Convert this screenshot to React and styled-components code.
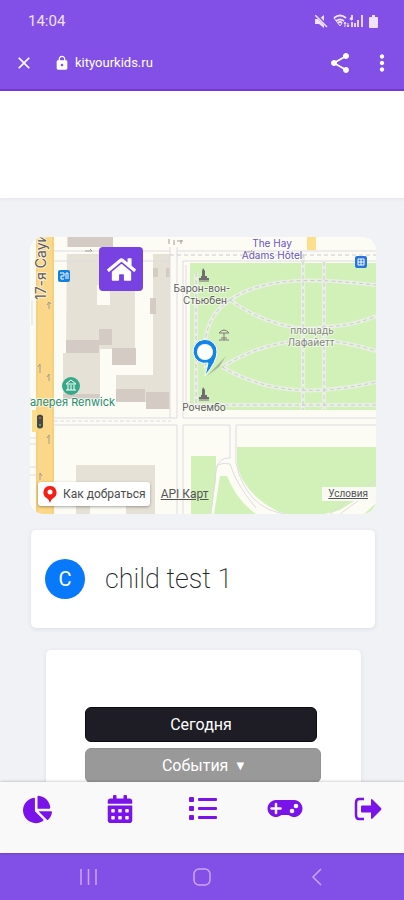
import React from "react";
import styled, { createGlobalStyle } from "styled-components";
import { MdClose, MdLock, MdShare, MdMoreVert } from "react-icons/md";
import { FaChartPie, FaCalendarAlt, FaHome } from "react-icons/fa";

const GlobalStyle = createGlobalStyle`
  * { box-sizing: border-box; }
  body { margin: 0; font-family: Roboto, "Liberation Sans", sans-serif; color: #212529; background: #f0f2f6; }
  button { font: inherit; border: 0; padding: 0; cursor: pointer; }
`;

const Screen = styled.div`
  display: flex;
  flex-direction: column;
  height: 100vh;
`;

const TopBar = styled.header`
  flex: none;
  color: #fff;
  background: #8250e6;
  border-bottom: 2px solid #7438d4;
`;

const StatusBar = styled.div`
  display: flex;
  align-items: center;
  justify-content: space-between;
  height: 42px;
  padding: 0 26px 0 28px;
  font-size: 15px;
  color: #f0e2fc;
`;

const StatusIcons = styled.div`
  display: flex;
  align-items: center;
  gap: 5px;
`;

const AddressBar = styled.div`
  display: flex;
  align-items: center;
  height: 47px;
  padding: 0 0 6px 14px;
`;

const BarButton = styled.button`
  display: flex;
  align-items: center;
  justify-content: center;
  width: ${(p) => p.$width}px;
  height: 32px;
  color: #fff;
  background: none;
`;

const Address = styled.div`
  display: flex;
  flex: 1;
  align-items: center;
  gap: 5px;
  margin-left: 20px;
  font-size: 13px;
`;

const Content = styled.main`
  flex: 1;
  min-height: 0;
  overflow-y: auto;
  scrollbar-width: none;
`;

const Banner = styled.div`
  height: 107px;
  background: #fff;
  box-shadow: 0 1px 3px rgba(60, 60, 90, 0.08);
`;

const Sections = styled.div`
  display: flex;
  flex-direction: column;
  padding: 39px 28px 24px 30px;
`;

const MapPanel = styled.section`
  position: relative;
  height: 277px;
  overflow: hidden;
  border-radius: 14px;
  background: #fcfcf5;
`;

const MapDrawing = styled.svg`
  display: block;
  width: 100%;
  height: 100%;
`;

const HomeButton = styled.button`
  position: absolute;
  top: 10px;
  left: 69px;
  display: flex;
  align-items: center;
  justify-content: center;
  width: 44px;
  height: 44px;
  color: #fff;
  background: #7842e2;
  border-radius: 4px;
`;

const MapFooter = styled.div`
  position: absolute;
  right: 0;
  bottom: 8px;
  left: 8px;
  display: flex;
  align-items: center;
  font-size: 12px;
`;

const RouteButton = styled.button`
  display: flex;
  align-items: center;
  gap: 5px;
  height: 24px;
  padding: 0 4px;
  color: #4b4b4b;
  font-size: 12px;
  white-space: nowrap;
  background: #fff;
  border-radius: 3px;
  box-shadow: 0 1px 3px rgba(0, 0, 0, 0.35);
`;

const MapLink = styled.a`
  margin-left: 11px;
  color: #555;
  white-space: nowrap;
  text-decoration: underline;
`;

const TermsLink = styled(MapLink)`
  margin-left: auto;
  padding: 0 8px 0 6px;
  font-size: 10px;
  line-height: 14px;
  background: #f8faf3;
`;

const ChildCard = styled.section`
  display: flex;
  align-items: center;
  gap: 20px;
  height: 98px;
  margin: 16px 1px 0;
  padding: 0 14px;
  background: #fff;
  border-radius: 5px;
  box-shadow: 0 1px 4px rgba(50, 50, 80, 0.1);
`;

const Avatar = styled.div`
  display: flex;
  align-items: center;
  justify-content: center;
  width: 40px;
  height: 40px;
  color: #fff;
  font-size: 20px;
  background: #0879fb;
  border-radius: 50%;
`;

const ChildName = styled.h1`
  margin: 0;
  font-size: 27px;
  font-weight: 200;
  line-height: 34px;
`;

const EventsCard = styled.section`
  display: flex;
  flex-direction: column;
  gap: 6px;
  height: 240px;
  margin: 22px 15px 0 16px;
  padding: 57px 40px 0 39px;
  background: #fff;
  border-radius: 5px;
  box-shadow: 0 1px 4px rgba(50, 50, 80, 0.1);
`;

const ActionButton = styled.button`
  flex: none;
  height: 35px;
  margin-right: ${(p) => (p.$muted ? 0 : 4)}px;
  color: #fff;
  font-size: 16px;
  background: ${(p) => (p.$muted ? "#999" : "#1e1d25")};
  border: 1px solid ${(p) => (p.$muted ? "#929292" : "#0c0b12")};
  border-radius: 6px;
`;

const Caret = styled.span`
  margin-left: 8px;
  font-family: "DejaVu Sans", sans-serif;
  font-size: 10px;
  vertical-align: 2px;
`;

const TabBar = styled.nav`
  z-index: 1;
  display: flex;
  flex: none;
  justify-content: space-between;
  height: 71px;
  padding: 8px 15px 0 16px;
  background: #f9f9f9;
  box-shadow: 0 0 3px rgba(0, 0, 0, 0.3);
`;

const Tab = styled.a`
  display: flex;
  align-items: center;
  justify-content: center;
  width: 42px;
  height: 38px;
  color: #7913e9;
`;

const SystemBar = styled.footer`
  display: grid;
  flex: none;
  grid-template-columns: repeat(3, 1fr);
  justify-items: center;
  width: 100%;
  height: 47px;
  padding: 0 31px;
  background: #8250e6;
`;

const SystemButton = styled(BarButton)`
  height: 47px;
  color: #cda5f5;
`;

const path = { fill: "none", stroke: "#e9efe2", strokeWidth: 4 };
const dash = { fill: "none", stroke: "#c9cccb", strokeWidth: 1, strokeDasharray: "4 3" };
const trails = [
  "M166 173V36",
  "M160 168H346",
  "M273 17V173", "M294 25V173",
  "M200 63C236 38 290 42 346 48",
  "M200 63C230 85 270 96 294 90C315 89 330 86 346 79",
  "M192 130C240 100 290 96 346 114",
  "M192 130C240 158 290 158 346 145",
  "M200 63C174 80 173 106 176 132",
];
const halo = { stroke: "#fcfcf5", strokeWidth: 2, strokeOpacity: 0.7, paintOrder: "stroke", strokeLinejoin: "round" };

function Monument({ x, y }) {
  return (
    <g transform={`translate(${x} ${y})`} fill="#716b72">
      <path d="M4 0L6 3V8H8V10H10V12H0V10H2V8H3V3Z" />
      <path d="M0 13H10" stroke="#716b72" />
    </g>
  );
}

function CityMap() {
  return (
    <MapDrawing viewBox="0 0 346 277" preserveAspectRatio="xMidYMid slice" role="img" aria-label="Карта" fontFamily='Inter, "Open Sans", sans-serif'>
      <path fill="#fcfcf5" d="M0 0H346V277H0Z" />
      <path fill="#e6e1d7" d="M37 0H83V17H79V68H80V48H105V128H82V112H70V161H33V116H36Z" />
      <path fill="#fcfcf5" d="M67 48H79V68H67Z" />
      <path fill="#e6e1d7" d="M123 12H140V172H116V165H86V138H123ZM46 228H125V277H96V258H60V277H46Z" />
      <path fill="#d3cbc4" d="M38 0H83V10H38ZM36 103H69V116H36ZM69 92H82V108H69ZM82 111H106V128H82ZM33 157H70V162H33ZM120 61H126V77H120ZM86 152H115V165H86ZM116 155H139V172H116ZM123 31H128V40H123ZM136 31H140V40H136Z" />
      <path fill="#fcfcf5" d="M0 10H346V17H0Z" />

      <path fill="#d2f1b8" d="M160 26H346V173H160ZM161 219H186V243L181 277H161ZM190 239H197Q207 264 226 277H184ZM207 210H346V250L310 273Q280 283 249 275Q213 257 207 227ZM334 277L346 266V277Z" />
      {trails.map((d) => <path key={d} d={d} {...path} />)}
      {trails.map((d) => <path key={`${d}-dash`} d={d} {...dash} />)}

      <g fill="none" stroke="#dedbe0" strokeWidth="1">
        <path d="M24 14H140M147 14H346M24 24H140M153 24H346M24 181H147M153 181H346M24 188H147V277M153 277V188H200M206 188H346" />
        <path d="M140 10V181M147 10V181M153 24V181M156 28V173" />
        <path d="M200 188V221Q188 220 186 234L181 277M206 188V226Q211 249 224 262Q237 275 256 277M186 230Q190 225 200 227Q206 247 226 271M300 277L346 243M310 277L346 251M0 201H6M0 207H6M2 63V88M0 230H6M0 238H6" />
        <path d="M24 184H141" strokeDasharray="4 2" />
      </g>
      <path d="M140 18H346" {...dash} />
      <path fill="#fbd889" d="M6 0H24V277H6Z" />
      <path stroke="#efc97c" d="M7 0V277M23 0V277" />
      <path fill="#fbdf8c" d="M277 0H286V13H277ZM2 173H7V195H2Z" />
      <g stroke="#a39b91" fill="none">
        <path d="M19 72V65L17 68M19 65L21 67M10 136V127L8 130M19 144V137L17 140M19 207V198L17 201M10 243V236L12 239" />
        <path d="M55 14H62L60 12M214 15H223L221 13M147 4H153M139 2V7M144 3V8M151 3V7" strokeWidth="1" />
      </g>
      <path fill="#444b46" d="M7 179Q10 176 13 179V190Q10 193 7 190Z" />
      <circle cx="10" cy="181" r="1" fill="#c85c50" /><circle cx="10" cy="188" r="1" fill="#77aa70" />

      <rect x="28" y="33" width="12" height="12" rx="2" fill="#1680dd" />
      <path d="M30 36H34V39H31V42H34M36 42V36H38V42" fill="none" stroke="#fff" strokeWidth="1" />
      <rect x="325" y="19" width="12" height="12" rx="2" fill="#2876db" />
      <path d="M328 22H334V28H328ZM328 25H334M331 22V28" fill="none" stroke="#fff" />
      <circle cx="41" cy="149" r="9" fill="#36a989" />
      <path d="M36 147L41 143L46 147ZM36 153H46M38 148V153M41 148V153M44 148V153" fill="none" stroke="#fff" />
      <Monument x="169" y="31" />
      <Monument x="169" y="150" />
      <path d="M189 96Q194 90 199 96ZM189 103H199M194 96V103M191 101H197" fill="none" stroke="#807981" />

      <g {...halo} fontSize="10" fill="#5c5a60">
        <text transform="translate(16 63) rotate(-90)" fontSize="14">17-я Сауи</text>
        <text x="172" y="55" textAnchor="middle">Барон-вон-</text>
        <text x="175" y="67" textAnchor="middle">Стьюбен</text>
        <text x="174" y="174" textAnchor="middle">Рочембо</text>
        <text x="282" y="97" textAnchor="middle" fill="#7f877c">площадь</text>
        <text x="281" y="109" textAnchor="middle" fill="#7f877c">Лафайетт</text>
        <text x="85" y="169" fontSize="11" textAnchor="end" fill="#238c70">Галерея Renwick</text>
        <g fill="#6954c4" textAnchor="middle">
          <text x="242" y="10">The Hay</text>
          <text x="242" y="22">Adams Hôtel</text>
        </g>
      </g>

      <path d="M177 139L196 119L189 130Z" fill="#8b8f82" opacity="0.6" />
      <path d="M175 139L178 126A12 12 0 1 1 187 115Q187 124 175 139Z" fill="#1584e6" stroke="#fff" />
      <circle cx="175" cy="115" r="8" fill="#fff" />
    </MapDrawing>
  );
}

function RoutePin() {
  return (
    <svg width="16" height="18" viewBox="0 0 16 18" aria-hidden="true">
      <path d="M8 1A6.5 6.5 0 0 0 5 13.3Q7 14.5 8 18Q9 14.5 11 13.3A6.5 6.5 0 0 0 8 1Z" fill="#f51f18" />
      <circle cx="8" cy="7" r="2.5" fill="#fff" />
    </svg>
  );
}

function ListIcon() {
  return (
    <svg width="28" height="26" viewBox="0 0 28 26" fill="currentColor" aria-hidden="true">
      {[1, 10, 19].map((y) => (
        <g key={y}>
          <rect y={y} width="5" height="5" rx="1" />
          <rect x="9" y={y + 1} width="19" height="3" rx="1" />
        </g>
      ))}
    </svg>
  );
}

function GamepadIcon() {
  return (
    <svg width="36" height="20" viewBox="0 0 36 20" aria-hidden="true">
      <path d="M9 1H27A8.5 8.5 0 1 1 21.5 16H14.5A8.5 8.5 0 1 1 9 1Z" fill="currentColor" />
      <path d="M9 5V14M4.5 9.5H13.5" stroke="#f9f9f9" strokeWidth="2.5" strokeLinecap="round" />
      <circle cx="29" cy="7" r="2.3" fill="#f9f9f9" /><circle cx="25" cy="12" r="2.3" fill="#f9f9f9" />
    </svg>
  );
}

function ExitIcon() {
  return (
    <svg width="28" height="24" viewBox="0 0 28 24" aria-hidden="true">
      <path d="M10 2H5Q2 2 2 6V18Q2 22 5 22H10" fill="none" stroke="currentColor" strokeWidth="2.5" />
      <path d="M8 8.5H17V3Q17 1 19 3L27 11Q28 12 27 13L19 21Q17 23 17 21V15.5H8Q7 15.5 7 14.5V9.5Q7 8.5 8 8.5Z" fill="currentColor" />
    </svg>
  );
}

function MuteIcon() {
  return (
    <svg width="13" height="13" viewBox="0 0 13 13" fill="currentColor" aria-hidden="true">
      <path d="M0 4H4L9 0V13L4 9H0Z" />
      <path d="M1 0L13 12" stroke="#8250e6" strokeWidth="3" />
      <path d="M0 0L12 12" stroke="currentColor" strokeWidth="1.5" />
    </svg>
  );
}

function NetworkIcons() {
  return (
    <svg width="31" height="14" viewBox="0 0 31 14" fill="none" stroke="currentColor" aria-hidden="true">
      <path d="M1 4Q7 -1 13 4M3 7Q7 4 11 7M5 9Q7 7 9 9" strokeWidth="1.8" />
      <path d="M1 4L7 12L9 9" /><path d="M12 8V13M15 9V13M11 10L12 8L13 10M14 11L15 13L16 11" />
      <path d="M19 1V6M17 4L19 6M19 8V13M22 9V13M25 6V13M29 1V13" strokeWidth="1.8" />
    </svg>
  );
}

function BatteryIcon() {
  return (
    <svg width="9" height="13" viewBox="0 0 9 13" fill="currentColor" aria-hidden="true">
      <path d="M3 0H6V2H8Q9 2 9 3V12Q9 13 8 13H1Q0 13 0 12V3Q0 2 1 2H3Z" />
    </svg>
  );
}

export default function App() {
  return (
    <>
      <GlobalStyle />
      <Screen>
        <TopBar>
          <StatusBar>
            <time>14:04</time>
            <StatusIcons>
              <MuteIcon />
              <NetworkIcons />
              <BatteryIcon />
            </StatusIcons>
          </StatusBar>
          <AddressBar>
            <BarButton $width={20} aria-label="Закрыть"><MdClose size={22} /></BarButton>
            <Address><MdLock size={16} /><span>kityourkids.ru</span></Address>
            <BarButton $width={40} aria-label="Поделиться"><MdShare size={24} /></BarButton>
            <BarButton $width={44} aria-label="Меню"><MdMoreVert size={26} /></BarButton>
          </AddressBar>
        </TopBar>
        <Content>
          <Banner />
          <Sections>
            <MapPanel>
              <CityMap />
              <HomeButton aria-label="Домой"><FaHome size={29} /></HomeButton>
              <MapFooter>
                <RouteButton><RoutePin />Как добраться</RouteButton>
                <MapLink href="#api">API Карт</MapLink>
                <TermsLink href="#terms">Условия</TermsLink>
              </MapFooter>
            </MapPanel>
            <ChildCard>
              <Avatar>C</Avatar>
              <ChildName>child test 1</ChildName>
            </ChildCard>
            <EventsCard>
              <ActionButton>Сегодня</ActionButton>
              <ActionButton $muted>События<Caret>▼</Caret></ActionButton>
            </EventsCard>
          </Sections>
        </Content>
        <TabBar>
          <Tab href="#stats" aria-label="Статистика"><FaChartPie size={29} /></Tab>
          <Tab href="#calendar" aria-label="Календарь"><FaCalendarAlt size={28} /></Tab>
          <Tab href="#list" aria-label="Список"><ListIcon /></Tab>
          <Tab href="#games" aria-label="Игры"><GamepadIcon /></Tab>
          <Tab href="#exit" aria-label="Выход"><ExitIcon /></Tab>
        </TabBar>
        <SystemBar>
          <SystemButton $width={48} aria-label="Недавние">
            <svg width="17" height="16" viewBox="0 0 17 16" fill="none" stroke="currentColor" strokeWidth="1.5"><path d="M1 0V16M8.5 0V16M16 0V16" /></svg>
          </SystemButton>
          <SystemButton $width={48} aria-label="Главный экран">
            <svg width="18" height="18" viewBox="0 0 18 18" fill="none" stroke="currentColor" strokeWidth="1.5"><rect x="1" y="1" width="16" height="16" rx="5" /></svg>
          </SystemButton>
          <SystemButton $width={48} aria-label="Назад">
            <svg width="11" height="18" viewBox="0 0 11 18" fill="none" stroke="currentColor" strokeWidth="1.5"><path d="M10 1L2 9L10 17" /></svg>
          </SystemButton>
        </SystemBar>
      </Screen>
    </>
  );
}
